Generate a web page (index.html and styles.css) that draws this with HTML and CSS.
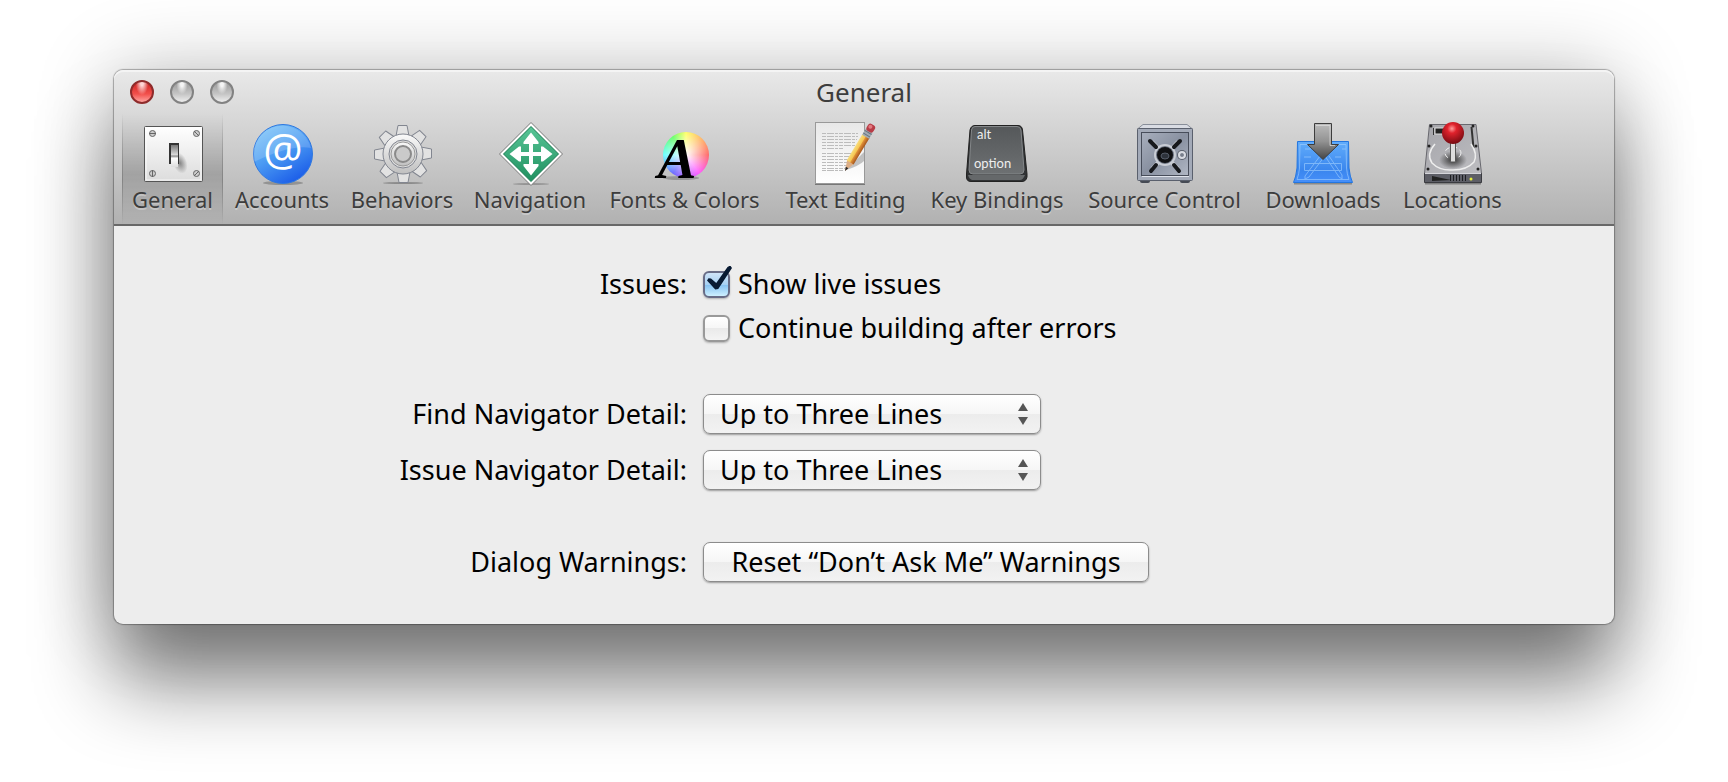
FILE: index.html
```html
<!DOCTYPE html>
<html lang="en">
<head>
    <meta charset="UTF-8">
    <meta name="viewport" content="width=device-width, initial-scale=1.0">
    <title>General</title>
    <link rel="stylesheet" href="styles.css">
</head>
<body>
    <main class="window">
        <header class="toolbar">
            <div class="titlebar">
                <div class="lights">
                    <button type="button" class="light close" aria-label="Close"></button>
                    <button type="button" class="light" aria-label="Minimize"></button>
                    <button type="button" class="light" aria-label="Zoom"></button>
                </div>
                <h1>General</h1>
            </div>

            <nav class="tabs">
                <button type="button" class="tab active">
                    <svg class="icon" viewBox="0 0 64 64">
                        <defs>
                            <linearGradient id="plate" x1="0" y1="0" x2="0" y2="1">
                                <stop offset="0" stop-color="#fff"/>
                                <stop offset="1" stop-color="#dcdcdc"/>
                            </linearGradient>
                            <linearGradient id="lever" x1="0" y1="0" x2="0" y2="1">
                                <stop offset="0" stop-color="#777"/>
                                <stop offset=".45" stop-color="#ddd"/>
                                <stop offset=".5" stop-color="#888"/>
                                <stop offset=".6" stop-color="#fff"/>
                                <stop offset="1" stop-color="#ddd"/>
                            </linearGradient>
                            <radialGradient id="leverShade">
                                <stop offset="0" stop-color="#444" stop-opacity=".6"/>
                                <stop offset="1" stop-color="#444" stop-opacity="0"/>
                            </radialGradient>
                        </defs>
                        <rect x="3.5" y="4.500" width="58" height="55" rx="1" fill="url(#plate)" stroke="#555"/>
                        <rect x="5" y="6" width="55" height="52" fill="none" stroke="#fff" opacity=".8"/>
                        <g fill="#ccc" stroke="#666">
                            <circle cx="11.5" cy="11.5" r="3"/>
                            <circle cx="55.5" cy="11.5" r="3"/>
                            <circle cx="11.5" cy="51.5" r="3"/>
                            <circle cx="55.5" cy="51.5" r="3"/>
                            <path d="M8 11.5h7M53 9l5 5M11.5 48v7M53 54l5-5"/>
                        </g>
                        <ellipse cx="39" cy="41" rx="7" ry="11" transform="rotate(-20 39 41)" fill="url(#leverShade)"/>
                        <rect x="28" y="21" width="10" height="21" fill="#333"/>
                        <rect x="30" y="23" width="7" height="22" fill="url(#lever)"/>
                    </svg>
                    <span>General</span>
                </button>

                <button type="button" class="tab">
                    <svg class="icon" viewBox="0 0 64 64">
                        <defs>
                            <linearGradient id="atBlue" x1=".1" y1="0" x2=".7" y2="1">
                                <stop offset="0" stop-color="#80c8f8"/>
                                <stop offset=".5" stop-color="#4b9bf3"/>
                                <stop offset="1" stop-color="#1a5be8"/>
                            </linearGradient>
                        </defs>
                        <ellipse cx="33" cy="61" rx="20" ry="2" fill="#666" opacity=".5"/>
                        <circle cx="33" cy="32" r="29.5" fill="url(#atBlue)" stroke="#2f78e0"/>
                        <path d="M4 40A29 29 0 0 1 61 26Q41 22 4 40z" fill="#fff" opacity=".16"/>
                        <text x="33" y="43" class="at">@</text>
                    </svg>
                    <span>Accounts</span>
                </button>

                <button type="button" class="tab">
                    <svg class="icon" viewBox="0 0 64 64">
                        <defs>
                            <linearGradient id="gear" x1="0" y1="0" x2="0" y2="1">
                                <stop offset="0" stop-color="#fafafa"/>
                                <stop offset="1" stop-color="#bfbfbf"/>
                            </linearGradient>
                            <path id="tooth" d="M26 14L28 3.5H37L39 14z"/>
                        </defs>
                        <ellipse cx="33" cy="61" rx="20" ry="1" fill="#555" opacity=".5"/>
                        <g fill="#e2e2e2" stroke="#828690" stroke-linejoin="round">
                            <use href="#tooth"/>
                            <use href="#tooth" transform="rotate(45 33 32)"/>
                            <use href="#tooth" transform="rotate(90 33 32)"/>
                            <use href="#tooth" transform="rotate(135 33 32)"/>
                            <use href="#tooth" transform="rotate(180 33 32)"/>
                            <use href="#tooth" transform="rotate(225 33 32)"/>
                            <use href="#tooth" transform="rotate(270 33 32)"/>
                            <use href="#tooth" transform="rotate(315 33 32)"/>
                            <circle cx="33" cy="32" r="20" fill="url(#gear)"/>
                            <circle cx="33" cy="32" r="14" fill="#ddd"/>
                            <circle cx="33" cy="32" r="12" stroke="#999" fill="url(#gear)"/>
                            <circle cx="33" cy="32" r="8" stroke-width="2" stroke="#8a8a8a" fill="#cacaca"/>
                        </g>
                    </svg>
                    <span>Behaviors</span>
                </button>

                <button type="button" class="tab">
                    <svg class="icon" viewBox="0 0 64 64">
                        <defs>
                            <linearGradient id="sign" x1="0" y1="0" x2="0" y2="1">
                                <stop offset="0" stop-color="#58c596"/>
                                <stop offset="1" stop-color="#209060"/>
                            </linearGradient>
                            <path id="arrow" d="M31 34V22H25.5V20L33 10.5L40.5 20V22H35V34z"/>
                        </defs>
                        <ellipse cx="33" cy="62" rx="18" ry="1" fill="#555" opacity=".4"/>
                        <path d="M33 .5L64.5 32L33 63.5L1.500 32z" fill="#fff" stroke="#777" stroke-linejoin="round"/>
                        <path d="M33 4.5L60.5 32L33 59.5L5.5 32z" fill="url(#sign)" stroke="#157a50"/>
                        <g fill="#fff">
                            <use href="#arrow"/>
                            <use href="#arrow" transform="rotate(90 33 32)"/>
                            <use href="#arrow" transform="rotate(180 33 32)"/>
                            <use href="#arrow" transform="rotate(270 33 32)"/>
                        </g>
                    </svg>
                    <span>Navigation</span>
                </button>

                <button type="button" class="tab">
                    <svg class="icon" viewBox="0 0 64 64">
                        <foreignObject x="10" y="10" width="46" height="46"><div class="wheel"></div></foreignObject>
                        <ellipse cx="28" cy="56" rx="18" ry="2" fill="#333" opacity=".3"/>
                        <text x="24" y="56" class="serif-a">A</text>
                    </svg>
                    <span>Fonts &amp; Colors</span>
                </button>

                <button type="button" class="tab">
                    <svg class="icon" viewBox="0 0 64 64">
                        <defs>
                            <linearGradient id="paper" x1="0" y1="0" x2="0" y2="1">
                                <stop offset="0" stop-color="#e8e8e8"/>
                                <stop offset="1" stop-color="#fff"/>
                            </linearGradient>
                            <linearGradient id="pencil" x1="0" y1="0" x2="1" y2="0">
                                <stop offset="0" stop-color="#f8dd7c"/>
                                <stop offset=".45" stop-color="#f5c651"/>
                                <stop offset=".55" stop-color="#e09038"/>
                                <stop offset="1" stop-color="#a6561c"/>
                            </linearGradient>
                        </defs>
                        <rect x="1.500" y=".5" width="49" height="61" fill="url(#paper)" stroke="#999"/>
                        <path d="M1 62.500h50" stroke="#777"/>
                        <g stroke="#bcbcbc" stroke-dasharray="4 1 7 1 3 1">
                            <path d="M8 11.500h36M8 14.500h36M8 17.500h35M8 20.500h34M8 23.500h33M8 26.500h22"/>
                            <path d="M8 31.500h30M8 34.500h31M8 37.500h28M8 40.500h27M8 43.500h26M8 46.500h23M8 48.500h22"/>
                        </g>
                        <path d="M32 48L50 30V39Q45 44 32 48z" fill="#444" opacity=".3"/>
                        <g transform="translate(31 49) rotate(31)">
                            <path d="M0 0L-4 -11H4z" fill="#dcae86"/>
                            <path d="M0 0L-1.500 -4H1.500z" fill="#222"/>
                            <rect x="-4" y="-41" width="8" height="31" fill="url(#pencil)"/>
                            <rect x="-4" y="-47" width="8" height="7" fill="#a2acb4"/>
                            <path d="M-4 -42h8M-4 -45h8" stroke="#68747e"/>
                            <rect x="-4" y="-54" width="8" height="8" rx="3" fill="#b83c46"/>
                            <circle cx="-1" cy="-51" r="2" fill="#e27a80"/>
                        </g>
                    </svg>
                    <span>Text Editing</span>
                </button>

                <button type="button" class="tab">
                    <svg class="icon" viewBox="0 0 64 64">
                        <defs>
                            <linearGradient id="key" x1="0" y1="0" x2="0" y2="1">
                                <stop offset="0" stop-color="#55585a"/>
                                <stop offset="1" stop-color="#6d7072"/>
                            </linearGradient>
                        </defs>
                        <path d="M10 3.500H53Q57 3.500 57.500 8L62 52V55Q61 59.500 57 59.500H6Q1.500 59.500 1.500 55V52L5 8Q6 3.500 10 3.500z" fill="#303234" stroke="#222"/>
                        <path d="M3 53H60Q58 58 55 58H7Q4 57 3 53z" fill="#65686a"/>
                        <path d="M10 4.500H52Q55.500 4.500 56 8L59 48Q59 52 55 52H8Q4 52 4 48L6.500 8Q7 4.500 10 4.500z" fill="url(#key)" stroke="#85888a"/>
                        <text x="12" y="17" class="keycap">alt</text>
                        <text x="9" y="46" class="keycap">option</text>
                    </svg>
                    <span>Key Bindings</span>
                </button>

                <button type="button" class="tab">
                    <svg class="icon" viewBox="0 0 64 64">
                        <defs>
                            <linearGradient id="safe" x1="0" y1="0" x2="1" y2="1">
                                <stop offset="0" stop-color="#a8afbd"/>
                                <stop offset=".5" stop-color="#8991a1"/>
                                <stop offset="1" stop-color="#b0b7c4"/>
                            </linearGradient>
                        </defs>
                        <rect x="7" y="56" width="10" height="5" rx="2" fill="#454a54"/>
                        <rect x="47" y="56" width="10" height="5" rx="2" fill="#454a54"/>
                        <path d="M10 2.500H54L59.500 7H4.500z" fill="#d9dce3" stroke="#888e99"/>
                        <rect x="4.500" y="6.500" width="55" height="52" rx="1" fill="#a3aab8" stroke="#5a606d"/>
                        <rect x="8.500" y="10.500" width="47" height="43" fill="url(#safe)" stroke="#474d5a"/>
                        <path d="M9 54.500h47" stroke="#e0e4ec"/>
                        <path d="M19 20L45 47M45 20L19 47" stroke="#c8ccd4" stroke-width="4"/>
                        <circle cx="32" cy="33" r="10" fill="#6d7482" stroke="#c8ccd4" stroke-width="2"/>
                        <path d="M17 19L23 25M47 19L41 25M18 49L23 43M46 49L41 43" stroke="#17191d" stroke-width="4" stroke-linecap="round"/>
                        <circle cx="32" cy="33" r="8" fill="#101114"/>
                        <ellipse cx="32" cy="34" rx="4" ry="3" fill="#2d323b" stroke="#555c68"/>
                        <circle cx="49" cy="33" r="5" fill="#5a606c"/>
                        <circle cx="49" cy="33" r="3" fill="#fff" stroke="#d8dbe2" stroke-width="2"/>
                        <circle cx="49" cy="33" r="2" fill="#777e8b"/>
                    </svg>
                    <span>Source Control</span>
                </button>

                <button type="button" class="tab">
                    <svg class="icon" viewBox="0 0 64 64">
                        <defs>
                            <linearGradient id="print" x1="0" y1="0" x2="0" y2="1">
                                <stop offset="0" stop-color="#62adfb"/>
                                <stop offset=".7" stop-color="#3a86ee"/>
                                <stop offset="1" stop-color="#468ffa"/>
                            </linearGradient>
                            <linearGradient id="down" x1="0" y1="0" x2="0" y2="1">
                                <stop offset="0" stop-color="#bbb"/>
                                <stop offset=".5" stop-color="#929292"/>
                                <stop offset="1" stop-color="#444"/>
                            </linearGradient>
                        </defs>
                        <path d="M3 61.500h58" stroke="#555" stroke-width="2" opacity=".5"/>
                        <path d="M6.500 19.500H57.500L58 46Q59 55 61.500 60.500H2.500Q5 55 6 46z" fill="url(#print)" stroke="#2476df"/>
                        <g fill="none" stroke="#a5d2ff" opacity=".6">
                            <path d="M9 22.500H55L55.500 46Q56 52 58 57.500H6Q8 52 8.500 46z"/>
                            <path d="M13.500 41.500H50.500V48.500H13.500zM14 27h6M13 35h7M44 35h6M51 27h4"/>
                            <path d="M29 34L14 54V57L18 55L33 35M34 34L48 55L51 57V53L38 34"/>
                        </g>
                        <path d="M23.500 1.500H40.500V22.500H47.500L32 37.500L16.500 22.500H23.500z" fill="url(#down)" stroke="#3d3d3d"/>
                        <path d="M25 3.500H39V23.500H44" fill="none" stroke="#e0e0e0" opacity=".7"/>
                    </svg>
                    <span>Downloads</span>
                </button>

                <button type="button" class="tab">
                    <svg class="icon" viewBox="0 0 64 64">
                        <defs>
                            <linearGradient id="disk" x1="0" y1="0" x2="1" y2="1">
                                <stop offset="0" stop-color="#a5a5aa"/>
                                <stop offset="1" stop-color="#bdbdc1"/>
                            </linearGradient>
                            <radialGradient id="ball" cx=".45" cy=".3" r=".7">
                                <stop offset="0" stop-color="#ff9b9b"/>
                                <stop offset=".3" stop-color="#e0222c"/>
                                <stop offset="1" stop-color="#760b12"/>
                            </radialGradient>
                            <radialGradient id="pit">
                                <stop offset="0" stop-color="#333"/>
                                <stop offset="1" stop-color="#333" stop-opacity="0"/>
                            </radialGradient>
                        </defs>
                        <path d="M4 61.500h56" stroke="#444" stroke-width="2" opacity=".5"/>
                        <path d="M8.500 2.500H55L60.500 51.500H3.500z" fill="url(#disk)" stroke="#68686e"/>
                        <path d="M3.500 51.500H60.500V60.500H3.500z" fill="#5d5e66" stroke="#3a3b40"/>
                        <path d="M4 51.500h56" stroke="#d5d5da"/>
                        <path d="M11 59V54L30 58z" fill="#222"/>
                        <path d="M29.500 53v6M32.500 53v6M35.500 53v6M38.500 53v6M41.500 53v6M44.500 53v6" stroke="#1d1e22"/>
                        <circle cx="50" cy="57" r="1.500" fill="#e5ed3c"/>
                        <circle cx="10" cy="4" r="1.500" fill="#222"/>
                        <circle cx="52" cy="4" r="1.500" fill="#222"/>
                        <circle cx="7" cy="47" r="1.500" fill="#222"/>
                        <circle cx="57" cy="47" r="1.500" fill="#222"/>
                        <circle cx="8" cy="24" r="1.500" fill="#222"/>
                        <circle cx="55" cy="24" r="1.500" fill="#222"/>
                        <path d="M12.500 6v7" stroke="#333"/>
                        <rect x="14" y="6" width="10" height="6" fill="#222" stroke="#ddd"/>
                        <path d="M50.500 5L52.500 26" stroke="#333" stroke-width="2"/>
                        <path d="M14 22Q5 32 11 41Q19 49 32 48Q46 48 53 40Q57 32 50 22" fill="none" stroke="#eee" stroke-width="1.500"/>
                        <ellipse cx="32" cy="38" rx="14" ry="9" fill="url(#pit)"/>
                        <ellipse cx="32" cy="31" rx="8" ry="6" fill="none" stroke="#eee" stroke-dasharray="5 3"/>
                        <rect x="29.500" y="20" width="5" height="20" rx="1" fill="#ddd" stroke="#555"/>
                        <circle cx="32" cy="11" r="11" fill="url(#ball)"/>
                    </svg>
                    <span>Locations</span>
                </button>
            </nav>
        </header>

        <form class="settings" onsubmit="event.preventDefault()">
            <span class="name">Issues:</span>
            <label class="check"><input type="checkbox" checked> Show live issues</label>
            <label class="check second"><input type="checkbox"> Continue building after errors</label>

            <label class="name group" for="find">Find Navigator Detail:</label>
            <div class="popup group">
                <select id="find">
                    <option>Up to Three Lines</option>
                </select>
            </div>

            <label class="name" for="issue">Issue Navigator Detail:</label>
            <div class="popup">
                <select id="issue">
                    <option>Up to Three Lines</option>
                </select>
            </div>

            <label class="name group" for="reset">Dialog Warnings:</label>
            <button type="button" id="reset" class="push group">Reset “Don’t Ask Me” Warnings</button>
        </form>
    </main>
</body>
</html>
```
FILE: styles.css
```css
* {
    box-sizing: border-box;
}

body {
    margin: 0;
    min-height: 100vh;
    padding: 70px 114px 0;
    background: #fff;
    color: #000;
    font-family: "Noto Sans", sans-serif;
    font-size: 27px;
    line-height: 28px;
}

button, select, input {
    font: inherit;
    color: inherit;
    margin: 0;
}

.window {
    border-radius: 9px;
    background: #ededed;
    box-shadow: 0 0 1px 1px rgba(0, 0, 0, .3), 0 0 80px rgba(0, 0, 0, .24), 0 60px 80px rgba(0, 0, 0, .48);
}

.toolbar {
    border-radius: 9px 9px 0 0;
    border-bottom: 2px solid #686868;
    background: linear-gradient(#e9e9e9, #b1b1b1);
    box-shadow: inset 0 2px 0 rgba(255, 255, 255, .5);
}

.titlebar {
    display: grid;
    grid-template-columns: 1fr auto 1fr;
    align-items: center;
    height: 44px;
    padding: 0 16px;
}

.titlebar h1 {
    margin: 0;
    font-size: 26px;
    font-weight: normal;
    color: #3d3d3d;
}

.lights {
    display: flex;
    gap: 16px;
}

.light {
    width: 24px;
    height: 24px;
    padding: 0;
    border: 2px solid #828282;
    border-radius: 50%;
    background: radial-gradient(ellipse at 50% 10%, #f5f5f5 10%, transparent 40%), linear-gradient(#999, #c5c5c5 60%, #eee);
}

.close {
    border-color: #8e2b2b;
    background: radial-gradient(ellipse at 50% 5%, #ffd5d5 10%, transparent 45%), linear-gradient(#c22, #f2504c 60%, #ffa4a0);
}

.tabs {
    display: grid;
    grid-template-columns: 101px 118px 122px 134px 175px 147px 156px 179px 138px 121px;
    height: 110px;
    padding-left: 8px;
}

.tab {
    display: flex;
    flex-direction: column;
    align-items: center;
    padding: 8px 0 0;
    border: 0;
    background: none;
    color: #3d3d3d;
    font-size: 22px;
    line-height: 26px;
    white-space: nowrap;
    text-shadow: 0 2px 0 rgba(255, 255, 255, .3);
}

.active {
    border: solid transparent;
    border-width: 0 1px;
    border-image: linear-gradient(transparent, #858585 60%, transparent) 1;
    background: linear-gradient(transparent, rgba(0, 0, 0, .17) 55%, transparent);
}

.icon {
    flex: none;
    width: 64px;
    height: 64px;
    overflow: visible;
}

.at {
    font: 44px "Open Sans", sans-serif;
    fill: #fff;
    text-anchor: middle;
    text-shadow: none;
}

.serif-a {
    font: italic bold 58px "Liberation Serif", serif;
    text-anchor: middle;
    text-shadow: none;
}

.wheel {
    height: 46px;
    border-radius: 50%;
    background: radial-gradient(#fff, transparent 80%), conic-gradient(#ff5, #f55 25%, #f4f 40%, #55f 60%, #5ff 75%, #5f5 90%, #ff5);
}

.keycap {
    font: 13px "Lato", sans-serif;
    fill: #eee;
    text-shadow: none;
}

.settings {
    display: grid;
    grid-template-columns: 573px 1fr;
    gap: 16px;
    align-items: center;
    justify-items: start;
    padding: 44px 0 42px;
}

.name {
    justify-self: end;
}

.check {
    display: flex;
    align-items: center;
    gap: 8px;
}

.second {
    grid-column: 2;
}

.group {
    margin-top: 36px;
}

.check input {
    appearance: none;
    position: relative;
    width: 27px;
    height: 27px;
    border: 2px solid #999;
    border-radius: 6px;
    background: linear-gradient(#fff, #f6f6f6 50%, #eaeaea 50%, #f4f4f4);
    box-shadow: 0 1px 2px rgba(0, 0, 0, .25);
}

.check input:checked {
    border-color: #686c86;
    background: linear-gradient(#cfe4f8, #a7d0f2 50%, #83bff0 50%, #cdf0ff);
}

/* the tick sticks out of the top right corner */
.check input:checked::after {
    content: "";
    position: absolute;
    left: 2px;
    top: -7px;
    width: 25px;
    height: 25px;
    background: #081a33;
    clip-path: polygon(0 60%, 6% 51%, 16% 52%, 37% 70%, 82% 6%, 93% 0, 100% 10%, 45% 94%, 33% 96%);
}

.popup {
    position: relative;
}

.popup select {
    appearance: none;
    display: block;
    width: 338px;
    padding: 0 40px 0 16px;
}

.popup select, .push {
    height: 40px;
    border: 1px solid #8c8c8c;
    border-radius: 7px;
    background: linear-gradient(#fff, #f6f6f6 50%, #ececec 50%, #f2f2f2);
    box-shadow: 0 1px 2px rgba(0, 0, 0, .35);
}

.popup::before, .popup::after {
    content: "";
    position: absolute;
    right: 13px;
    border: solid transparent;
    border-width: 0 5px;
}

.popup::before {
    top: 9px;
    border-bottom: 8px solid #555;
}

.popup::after {
    bottom: 9px;
    border-top: 8px solid #555;
}

.push {
    width: 446px;
    padding: 0;
}
```
